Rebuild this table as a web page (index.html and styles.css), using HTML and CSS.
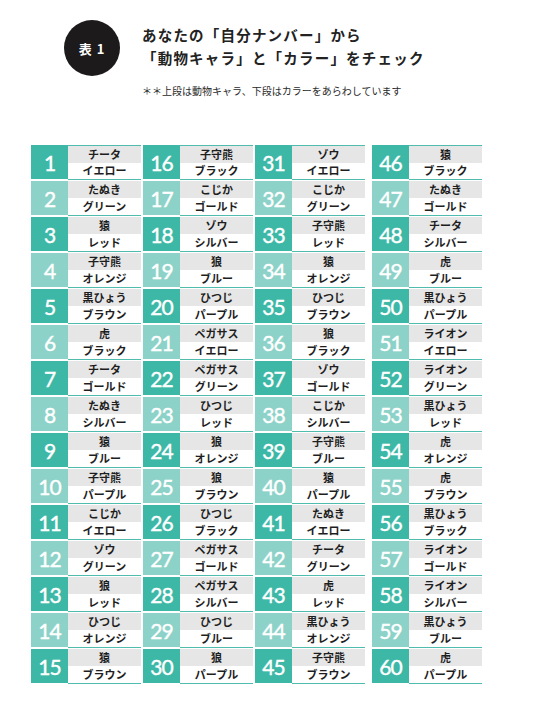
FILE: index.html
```html
<!DOCTYPE html>
<html lang="ja">
<head>
<meta charset="utf-8">
<link rel="stylesheet" href="styles.css">
</head>
<body>
<div class="page">
  <header class="header">
    <div class="badge">表 1</div>
    <div class="titles">
      <h1 class="title">あなたの「自分ナンバー」から<br>「動物キャラ」と「カラー」をチェック</h1>
      <p class="note">＊＊上段は動物キャラ、下段はカラーをあらわしています</p>
    </div>
  </header>
  <div class="table">
    <div class="group">
      <div class="row dark"><div class="num">1</div><div class="lab"><div class="a">チータ</div><div class="b">イエロー</div></div></div>
      <div class="row light"><div class="num">2</div><div class="lab"><div class="a">たぬき</div><div class="b">グリーン</div></div></div>
      <div class="row dark"><div class="num">3</div><div class="lab"><div class="a">猿</div><div class="b">レッド</div></div></div>
      <div class="row light"><div class="num">4</div><div class="lab"><div class="a">子守熊</div><div class="b">オレンジ</div></div></div>
      <div class="row dark"><div class="num">5</div><div class="lab"><div class="a">黒ひょう</div><div class="b">ブラウン</div></div></div>
      <div class="row light"><div class="num">6</div><div class="lab"><div class="a">虎</div><div class="b">ブラック</div></div></div>
      <div class="row dark"><div class="num">7</div><div class="lab"><div class="a">チータ</div><div class="b">ゴールド</div></div></div>
      <div class="row light"><div class="num">8</div><div class="lab"><div class="a">たぬき</div><div class="b">シルバー</div></div></div>
      <div class="row dark"><div class="num">9</div><div class="lab"><div class="a">猿</div><div class="b">ブルー</div></div></div>
      <div class="row light"><div class="num">10</div><div class="lab"><div class="a">子守熊</div><div class="b">パープル</div></div></div>
      <div class="row dark"><div class="num">11</div><div class="lab"><div class="a">こじか</div><div class="b">イエロー</div></div></div>
      <div class="row light"><div class="num">12</div><div class="lab"><div class="a">ゾウ</div><div class="b">グリーン</div></div></div>
      <div class="row dark"><div class="num">13</div><div class="lab"><div class="a">狼</div><div class="b">レッド</div></div></div>
      <div class="row light"><div class="num">14</div><div class="lab"><div class="a">ひつじ</div><div class="b">オレンジ</div></div></div>
      <div class="row dark"><div class="num">15</div><div class="lab"><div class="a">猿</div><div class="b">ブラウン</div></div></div>
    </div>
    <div class="group">
      <div class="row dark"><div class="num">16</div><div class="lab"><div class="a">子守熊</div><div class="b">ブラック</div></div></div>
      <div class="row light"><div class="num">17</div><div class="lab"><div class="a">こじか</div><div class="b">ゴールド</div></div></div>
      <div class="row dark"><div class="num">18</div><div class="lab"><div class="a">ゾウ</div><div class="b">シルバー</div></div></div>
      <div class="row light"><div class="num">19</div><div class="lab"><div class="a">狼</div><div class="b">ブルー</div></div></div>
      <div class="row dark"><div class="num">20</div><div class="lab"><div class="a">ひつじ</div><div class="b">パープル</div></div></div>
      <div class="row light"><div class="num">21</div><div class="lab"><div class="a">ペガサス</div><div class="b">イエロー</div></div></div>
      <div class="row dark"><div class="num">22</div><div class="lab"><div class="a">ペガサス</div><div class="b">グリーン</div></div></div>
      <div class="row light"><div class="num">23</div><div class="lab"><div class="a">ひつじ</div><div class="b">レッド</div></div></div>
      <div class="row dark"><div class="num">24</div><div class="lab"><div class="a">狼</div><div class="b">オレンジ</div></div></div>
      <div class="row light"><div class="num">25</div><div class="lab"><div class="a">狼</div><div class="b">ブラウン</div></div></div>
      <div class="row dark"><div class="num">26</div><div class="lab"><div class="a">ひつじ</div><div class="b">ブラック</div></div></div>
      <div class="row light"><div class="num">27</div><div class="lab"><div class="a">ペガサス</div><div class="b">ゴールド</div></div></div>
      <div class="row dark"><div class="num">28</div><div class="lab"><div class="a">ペガサス</div><div class="b">シルバー</div></div></div>
      <div class="row light"><div class="num">29</div><div class="lab"><div class="a">ひつじ</div><div class="b">ブルー</div></div></div>
      <div class="row dark"><div class="num">30</div><div class="lab"><div class="a">狼</div><div class="b">パープル</div></div></div>
    </div>
    <div class="group">
      <div class="row dark"><div class="num">31</div><div class="lab"><div class="a">ゾウ</div><div class="b">イエロー</div></div></div>
      <div class="row light"><div class="num">32</div><div class="lab"><div class="a">こじか</div><div class="b">グリーン</div></div></div>
      <div class="row dark"><div class="num">33</div><div class="lab"><div class="a">子守熊</div><div class="b">レッド</div></div></div>
      <div class="row light"><div class="num">34</div><div class="lab"><div class="a">猿</div><div class="b">オレンジ</div></div></div>
      <div class="row dark"><div class="num">35</div><div class="lab"><div class="a">ひつじ</div><div class="b">ブラウン</div></div></div>
      <div class="row light"><div class="num">36</div><div class="lab"><div class="a">狼</div><div class="b">ブラック</div></div></div>
      <div class="row dark"><div class="num">37</div><div class="lab"><div class="a">ゾウ</div><div class="b">ゴールド</div></div></div>
      <div class="row light"><div class="num">38</div><div class="lab"><div class="a">こじか</div><div class="b">シルバー</div></div></div>
      <div class="row dark"><div class="num">39</div><div class="lab"><div class="a">子守熊</div><div class="b">ブルー</div></div></div>
      <div class="row light"><div class="num">40</div><div class="lab"><div class="a">猿</div><div class="b">パープル</div></div></div>
      <div class="row dark"><div class="num">41</div><div class="lab"><div class="a">たぬき</div><div class="b">イエロー</div></div></div>
      <div class="row light"><div class="num">42</div><div class="lab"><div class="a">チータ</div><div class="b">グリーン</div></div></div>
      <div class="row dark"><div class="num">43</div><div class="lab"><div class="a">虎</div><div class="b">レッド</div></div></div>
      <div class="row light"><div class="num">44</div><div class="lab"><div class="a">黒ひょう</div><div class="b">オレンジ</div></div></div>
      <div class="row dark"><div class="num">45</div><div class="lab"><div class="a">子守熊</div><div class="b">ブラウン</div></div></div>
    </div>
    <div class="group last">
      <div class="row dark"><div class="num">46</div><div class="lab"><div class="a">猿</div><div class="b">ブラック</div></div></div>
      <div class="row light"><div class="num">47</div><div class="lab"><div class="a">たぬき</div><div class="b">ゴールド</div></div></div>
      <div class="row dark"><div class="num">48</div><div class="lab"><div class="a">チータ</div><div class="b">シルバー</div></div></div>
      <div class="row light"><div class="num">49</div><div class="lab"><div class="a">虎</div><div class="b">ブルー</div></div></div>
      <div class="row dark"><div class="num">50</div><div class="lab"><div class="a">黒ひょう</div><div class="b">パープル</div></div></div>
      <div class="row light"><div class="num">51</div><div class="lab"><div class="a">ライオン</div><div class="b">イエロー</div></div></div>
      <div class="row dark"><div class="num">52</div><div class="lab"><div class="a">ライオン</div><div class="b">グリーン</div></div></div>
      <div class="row light"><div class="num">53</div><div class="lab"><div class="a">黒ひょう</div><div class="b">レッド</div></div></div>
      <div class="row dark"><div class="num">54</div><div class="lab"><div class="a">虎</div><div class="b">オレンジ</div></div></div>
      <div class="row light"><div class="num">55</div><div class="lab"><div class="a">虎</div><div class="b">ブラウン</div></div></div>
      <div class="row dark"><div class="num">56</div><div class="lab"><div class="a">黒ひょう</div><div class="b">ブラック</div></div></div>
      <div class="row light"><div class="num">57</div><div class="lab"><div class="a">ライオン</div><div class="b">ゴールド</div></div></div>
      <div class="row dark"><div class="num">58</div><div class="lab"><div class="a">ライオン</div><div class="b">シルバー</div></div></div>
      <div class="row light"><div class="num">59</div><div class="lab"><div class="a">黒ひょう</div><div class="b">ブルー</div></div></div>
      <div class="row dark"><div class="num">60</div><div class="lab"><div class="a">虎</div><div class="b">パープル</div></div></div>
    </div>
  </div>
</div>
</body>
</html>
```
FILE: styles.css
```css
html, body {
  margin: 0;
  padding: 0;
  background: #ffffff;
}
body {
  font-family: "Noto Sans CJK JP", "Noto Sans", sans-serif;
  color: #222222;
}
.page {
  width: 537px;
  padding-top: 20px;
}
.header {
  display: flex;
  align-items: flex-start;
  padding-left: 64px;
}
.badge {
  width: 56px;
  height: 56px;
  border-radius: 50%;
  background: #1c1a1a;
  color: #ffffff;
  font-size: 13px;
  font-weight: 700;
  display: flex;
  align-items: center;
  justify-content: center;
  letter-spacing: 1px;
  flex-shrink: 0;
}
.titles {
  margin-left: 22px;
  margin-top: 3px;
}
.title {
  margin: 0;
  font-size: 14.5px;
  font-weight: 700;
  line-height: 23px;
  letter-spacing: 1.2px;
  color: #222222;
}
.note {
  margin: 15px 0 0 0;
  font-size: 10px;
  line-height: 14px;
  color: #2a2a2a;
  letter-spacing: 0;
}
.table {
  display: flex;
  margin-top: 47px;
  padding-left: 31px;
}
.group {
  display: flex;
  flex-direction: column;
  margin-right: 2px;
}
.group.last {
  margin-left: 5px;
}
.row {
  display: flex;
  height: 36px;
}
.num {
  width: 37px;
  height: 34px;
  display: flex;
  align-items: center;
  justify-content: center;
  color: #ffffff;
  font-family: "Lato", "Open Sans", sans-serif;
  font-size: 21px;
  letter-spacing: -1px;
  padding-top: 1px;
  box-sizing: border-box;
  -webkit-text-stroke: 0.4px #ffffff;
}
.dark .num {
  background: #3db8a7;
}
.light .num {
  background: #8dd2c8;
}
.lab {
  width: 73px;
  height: 35px;
  border-bottom: 1px solid #4fbcad;
  box-sizing: border-box;
  display: flex;
  flex-direction: column;
}
.row:first-child .lab {
  border-top: 1px solid #4fbcad;
}
.a, .b {
  flex: 1;
  display: flex;
  align-items: center;
  justify-content: center;
  font-size: 11px;
  font-weight: 700;
  color: #1e1e1e;
  line-height: 1;
}
.a {
  background: #e6e6e6;
}
.b {
  background: #ffffff;
}
```
